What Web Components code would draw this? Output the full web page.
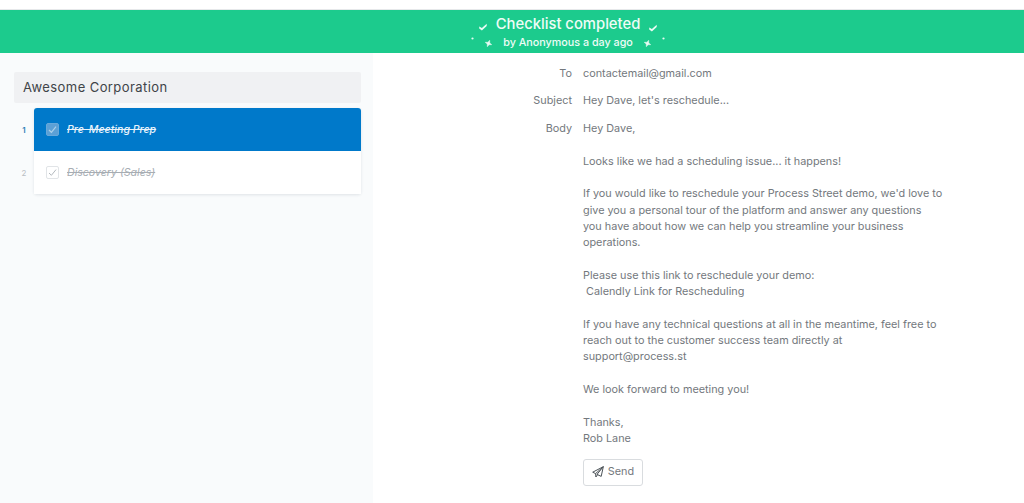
<!DOCTYPE html>
<html>
<head>
<meta charset="utf-8">
<title>Checklist</title>
<style>
    html, body { margin: 0; height: 100%; overflow: hidden; background: #fff; }
    body { font-family: Inter, "Liberation Sans", sans-serif; }
</style>
</head>
<body>
<x-app>
    <x-banner slot="banner"></x-banner>
    <x-sidebar slot="sidebar" title="Awesome Corporation">
        <x-task number="1" active>Pre-Meeting Prep</x-task>
        <x-task number="2">Discovery (Sales)</x-task>
    </x-sidebar>
    <x-email slot="main" to="contactemail@gmail.com" subject="Hey Dave, let's reschedule...">
        <p>Hey Dave,</p>
        <p>Looks like we had a scheduling issue... it happens!</p>
        <p>If you would like to reschedule your Process Street demo, we'd love to give you a personal tour of the platform and answer any questions you have about how we can help you streamline your business operations.</p>
        <p>Please use this link to reschedule your demo:<br>&nbsp;Calendly Link for Rescheduling</p>
        <p>If you have any technical questions at all in the meantime, feel free to reach out to the customer success team directly at support@process.st</p>
        <p>We look forward to meeting you!</p>
        <p>Thanks,<br>Rob Lane</p>
    </x-email>
</x-app>
<script>
class XApp extends HTMLElement {
    constructor() {
        super();
        this.attachShadow({mode: 'open'});
        this.shadowRoot.innerHTML = `
<style>
    :host { display: flex; flex-direction: column; height: 503px; }
    .columns { display: flex; flex: 1; min-height: 0; }
    .side { width: 373px; flex: none; }
    .main { flex: 1; min-width: 0; }
</style>
<slot name="banner"></slot>
<div class="columns">
    <div class="side"><slot name="sidebar"></slot></div>
    <div class="main"><slot name="main"></slot></div>
</div>`;
    }
}

const tick = '<path d="M0.2 3.4 L2.9 5 L7.7 0.8 L7.7 3.1 L2.9 7.5 L0.2 5.6 Z" fill="#e9fbf4"/>';
const star = '<path d="M3.5 0 L4.5 2.5 L7 3.5 L4.5 4.5 L3.5 7 L2.5 4.5 L0 3.5 L2.5 2.5 Z" fill="#e9fbf4" stroke="#e9fbf4" stroke-width="0.4" transform="rotate(20 3.5 3.5)"/>';

class XBanner extends HTMLElement {
    constructor() {
        super();
        this.attachShadow({mode: 'open'});
        this.shadowRoot.innerHTML = `
<style>
    :host {
        display: flex;
        flex-direction: column;
        align-items: center;
        box-sizing: border-box;
        margin-top: 9px;
        border-top: 1px solid #e6e8ea;
        height: 44px;
        padding-left: 112px;
        background: #1ccb8d;
        color: #effcf7;
    }
    .title { display: flex; align-items: center; font-size: 14.8px; font-weight: 500; line-height: 18px; margin-top: 5px; }
    .by { display: flex; align-items: center; font-size: 10.75px; font-weight: 500; line-height: 14px; margin-top: 3px; }
    svg { display: block; flex: none; }
    .t1 { margin: 6px 9px 0 0; }
    .t2 { margin: 7px 0 0 9px; }
    .d1 { margin: -9px 0 0 0; }
    .s1 { margin: 1px 11px 0 11px; }
    .s2 { margin: 1px 11px 0 11px; }
</style>
<div class="title">
    <svg class="t1" width="8" height="8" viewBox="0 0 8 8">${tick}</svg>
    <span>Checklist completed</span>
    <svg class="t2" width="8" height="8" viewBox="0 0 8 8">${tick}</svg>
</div>
<div class="by">
    <svg class="d1" width="3" height="3"><circle cx="1.5" cy="1.5" r="1.1" fill="#e9fbf4"/></svg>
    <svg class="s1" width="7" height="7" viewBox="0 0 7 7">${star}</svg>
    <span>by Anonymous a day ago</span>
    <svg class="s2" width="7" height="7" viewBox="0 0 7 7">${star}</svg>
    <svg class="d1" width="3" height="3"><circle cx="1.5" cy="1.5" r="1.1" fill="#e9fbf4"/></svg>
</div>`;
    }
}

class XSidebar extends HTMLElement {
    constructor() {
        super();
        this.attachShadow({mode: 'open'});
        this.shadowRoot.innerHTML = `
<style>
    :host {
        display: block;
        box-sizing: border-box;
        height: 100%;
        padding: 19px 12px 0 14px;
        background: #f9fbfc;
    }
    .title {
        height: 31px;
        line-height: 31px;
        padding-left: 9px;
        background: #f0f1f3;
        border-radius: 2px;
        font-size: 13px;
        letter-spacing: 0.42px;
        color: #3f4448;
    }
    .list {
        margin: 5px 0 0 20px;
        border-radius: 3px;
        box-shadow: 0 1px 3px rgba(40, 60, 80, 0.12);
        background: #fff;
    }
</style>
<div class="title"></div>
<div class="list"><slot></slot></div>`;
        this.shadowRoot.querySelector('.title').textContent = this.getAttribute('title');
    }
}

class XTask extends HTMLElement {
    constructor() {
        super();
        this.attachShadow({mode: 'open'});
        this.shadowRoot.innerHTML = `
<style>
    :host {
        display: flex;
        align-items: center;
        position: relative;
        height: 43px;
        padding-left: 12px;
        color: #a7adb3;
        background: #fff;
    }
    :host([active]) {
        background: #0079ca;
        color: #e8f3fb;
        border-radius: 3px 3px 0 0;
    }
    .number {
        position: absolute;
        left: -20px;
        width: 20px;
        text-align: center;
        font-size: 8px;
        color: #b9bfc4;
    }
    :host([active]) .number { color: #2f7fb8; font-weight: 600; }
    .box {
        width: 13px;
        height: 13px;
        flex: none;
        box-sizing: border-box;
        border: 1px solid #e1e4e7;
        border-radius: 2px;
        margin-right: 8px;
        display: flex;
        align-items: center;
        justify-content: center;
    }
    :host([active]) .box { background: #5ba0d6; border-color: #66a8da; }
    svg { display: block; fill: none; stroke: #b3b9be; stroke-width: 1; }
    :host([active]) svg { stroke: #a9d0ea; stroke-width: 1.2; }
    .text { font-size: 10.6px; font-style: italic; text-decoration: line-through; }
    :host([active]) .text { font-weight: 500; }
</style>
<span class="number"></span>
<span class="box"><svg width="9" height="9" viewBox="0 0 9 9"><path d="M1 5 L3.4 7.3 L8 1.6"/></svg></span>
<span class="text"><slot></slot></span>`;
        this.shadowRoot.querySelector('.number').textContent = this.getAttribute('number');
    }
}

class XEmail extends HTMLElement {
    constructor() {
        super();
        this.attachShadow({mode: 'open'});
        this.shadowRoot.innerHTML = `
<style>
    :host {
        display: grid;
        grid-template-columns: 199px 360px;
        column-gap: 11px;
        row-gap: 10.7px;
        align-content: start;
        padding-top: 13px;
        font-size: 10.83px;
        line-height: 16.3px;
        color: #73787d;
    }
    .label { text-align: right; }
    .body, .body-label { padding-top: 1.2px; }
    ::slotted(p) { margin: 0 0 16.3px; }
    ::slotted(p:last-of-type) { margin-bottom: 7.9px; }
    .send {
        display: inline-flex;
        align-items: center;
        gap: 4px;
        box-sizing: border-box;
        width: 60px;
        height: 27px;
        margin-top: 4px;
        justify-content: center;
        background: #fff;
        border: 1px solid #d9dcdf;
        border-radius: 3px;
        font: inherit;
        color: #73787d;
    }
    .send svg { display: block; fill: none; stroke: #4c5358; stroke-width: 1; stroke-linejoin: round; }
</style>
<div class="label">To</div><div class="to"></div>
<div class="label">Subject</div><div class="subject"></div>
<div class="label body-label">Body</div>
<div class="body">
    <slot></slot>
    <button class="send">
        <svg width="12" height="12" viewBox="0 0 12 12"><path d="M11.3 0.7 L0.7 6.2 L3.6 7.6 L11.3 0.7 L5 8.4 L9.2 10.4 Z M3.6 7.6 L3.9 11 L5.6 8.7"/></svg>
        Send
    </button>
</div>`;
        this.shadowRoot.querySelector('.to').textContent = this.getAttribute('to');
        this.shadowRoot.querySelector('.subject').textContent = this.getAttribute('subject');
    }
}

window.customElements.define('x-app', XApp);
window.customElements.define('x-banner', XBanner);
window.customElements.define('x-sidebar', XSidebar);
window.customElements.define('x-task', XTask);
window.customElements.define('x-email', XEmail);
</script>
</body>
</html>
